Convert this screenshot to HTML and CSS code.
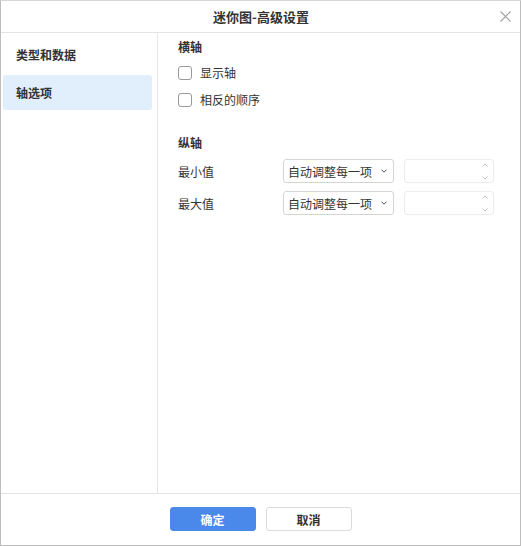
FILE: index.html
```html
<!DOCTYPE html>
<html lang="zh">
<head>
<meta charset="utf-8">
<title>迷你图-高级设置</title>
<link rel="stylesheet" href="styles.css">
</head>
<body>
<div class="dialog">
  <div class="titlebar">
    <span class="title">迷你图-高级设置</span>
    <svg class="close" width="11" height="11" viewBox="0 0 11 11"><path d="M0.5 0.5 L10.5 10.5 M10.5 0.5 L0.5 10.5" stroke="#a0a0a0" stroke-width="1.1" fill="none"/></svg>
  </div>
  <div class="main">
    <div class="sidebar">
      <div class="nav-item">类型和数据</div>
      <div class="nav-item active">轴选项</div>
    </div>
    <div class="content">
      <div class="section-title">横轴</div>
      <label class="check-row"><span class="box"></span><span>显示轴</span></label>
      <label class="check-row"><span class="box"></span><span>相反的顺序</span></label>
      <div class="section-title second">纵轴</div>
      <div class="field-row">
        <span class="field-label">最小值</span>
        <div class="select"><span>自动调整每一项</span><svg width="6" height="4" viewBox="0 0 6 4"><path d="M0.5 0.8 L3 3.2 L5.5 0.8" stroke="#555" stroke-width="1" fill="none"/></svg></div>
        <div class="spin"><svg class="spin-arrows" width="8" height="19" viewBox="0 0 8 19"><path d="M1.5 4.5 L4 2 L6.5 4.5" stroke="#c4c4c4" stroke-width="1" fill="none"/><path d="M1.5 14.5 L4 17 L6.5 14.5" stroke="#c4c4c4" stroke-width="1" fill="none"/></svg></div>
      </div>
      <div class="field-row">
        <span class="field-label">最大值</span>
        <div class="select"><span>自动调整每一项</span><svg width="6" height="4" viewBox="0 0 6 4"><path d="M0.5 0.8 L3 3.2 L5.5 0.8" stroke="#555" stroke-width="1" fill="none"/></svg></div>
        <div class="spin"><svg class="spin-arrows" width="8" height="19" viewBox="0 0 8 19"><path d="M1.5 4.5 L4 2 L6.5 4.5" stroke="#c4c4c4" stroke-width="1" fill="none"/><path d="M1.5 14.5 L4 17 L6.5 14.5" stroke="#c4c4c4" stroke-width="1" fill="none"/></svg></div>
      </div>
    </div>
  </div>
  <div class="footer">
    <button class="btn primary">确定</button>
    <button class="btn">取消</button>
  </div>
</div>
</body>
</html>
```

FILE: styles.css
```css
* { box-sizing: border-box; }
html, body { margin: 0; padding: 0; background: #fff; }
body {
  font-family: "Noto Sans CJK SC", "Noto Sans", sans-serif;
  font-size: 12px;
  color: #333;
}
.dialog {
  width: 521px;
  height: 546px;
  border: 1px solid #bdbdbd;
  border-top-color: #d6d6d6;
  display: flex;
  flex-direction: column;
  background: #fff;
}
.titlebar {
  height: 32px;
  flex: none;
  border-bottom: 1px solid #e3e3e3;
  display: flex;
  align-items: center;
  justify-content: center;
  position: relative;
}
.title {
  font-size: 13px;
  font-weight: bold;
  color: #333;
  margin-left: 1px;
}
.close {
  position: absolute;
  right: 9px;
  top: 10px;
}
.main {
  flex: 1;
  display: flex;
  min-height: 0;
}
.sidebar {
  width: 157px;
  flex: none;
  border-right: 1px solid #e6e6e6;
  padding: 4px 5px 0 2px;
  display: flex;
  flex-direction: column;
  gap: 3px;
}
.nav-item {
  height: 35px;
  line-height: 35px;
  padding-left: 13px;
  font-weight: bold;
  color: #333;
  border-radius: 3px;
}
.nav-item.active {
  background: #e1eefc;
}
.content {
  flex: 1;
  padding: 4px 20px 0 20px;
  display: flex;
  flex-direction: column;
}
.section-title {
  height: 20px;
  line-height: 20px;
  font-weight: bold;
  margin-bottom: 2px;
}
.section-title.second {
  margin-top: 20px;
  margin-bottom: 6px;
}
.check-row {
  height: 27px;
  display: flex;
  align-items: center;
}
.box {
  width: 14px;
  height: 14px;
  border: 1px solid #9a9a9a;
  border-radius: 3px;
  margin-right: 8px;
  background: #fff;
}
.field-row {
  height: 24px;
  display: flex;
  align-items: center;
  margin-bottom: 8px;
}
.field-label {
  width: 105px;
}
.select {
  width: 111px;
  height: 24px;
  border: 1px solid #d4d4d4;
  border-radius: 3px;
  display: flex;
  align-items: center;
  justify-content: space-between;
  padding: 0 6px 0 4px;
}
.spin {
  width: 90px;
  height: 24px;
  margin-left: 10px;
  border: 1px solid #ececec;
  border-radius: 3px;
  display: flex;
  align-items: center;
  justify-content: flex-end;
  padding-right: 4px;
}
.footer {
  height: 52px;
  flex: none;
  border-top: 1px solid #e3e3e3;
  display: flex;
  align-items: center;
  justify-content: center;
  gap: 10px;
  padding-bottom: 1px;
}
.btn {
  width: 86px;
  height: 24px;
  border: 1px solid #dcdcdc;
  border-radius: 3px;
  background: #fff;
  font-family: inherit;
  font-size: 12px;
  font-weight: bold;
  color: #333;
  padding: 0;
}
.btn.primary {
  background: #4a88ea;
  border-color: #4a88ea;
  color: #fff;
}
```
